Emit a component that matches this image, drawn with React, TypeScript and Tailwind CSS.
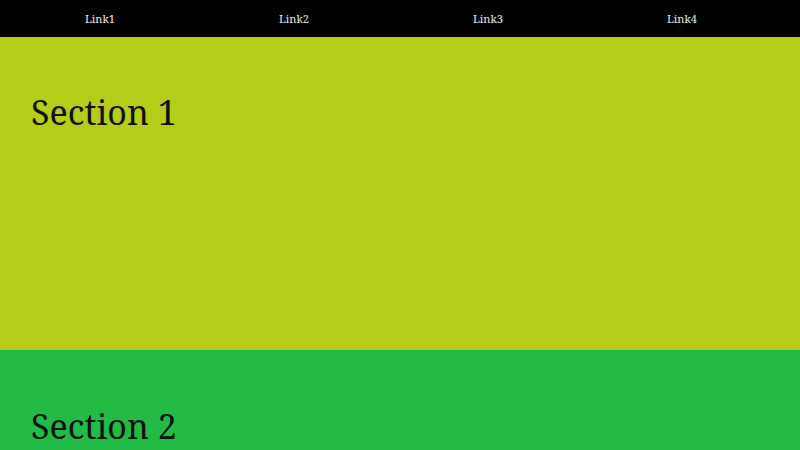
export default function App() {
  const font = { fontFamily: '"Noto Serif", "DejaVu Serif", serif' };
  const links = ["Link1", "Link2", "Link3", "Link4"];
  return (
    <div className="w-[800px] h-[450px] overflow-hidden" style={font}>
      <nav className="h-[37px] bg-black flex items-center pl-[3px] pt-[2px]">
        {links.map((l) => (
          <a key={l} className="w-[194px] text-center text-[11px] text-[#e8e8e8]">
            {l}
          </a>
        ))}
      </nav>
      <section className="h-[313px] bg-[#b5cd19] pt-[58px] pl-[31px]">
        <h1 className="text-[34px] leading-none text-[#111]">Section 1</h1>
      </section>
      <section className="h-[313px] bg-[#22bb45] pt-[59px] pl-[31px]">
        <h1 className="text-[34px] leading-none text-[#111]">Section 2</h1>
      </section>
    </div>
  );
}
